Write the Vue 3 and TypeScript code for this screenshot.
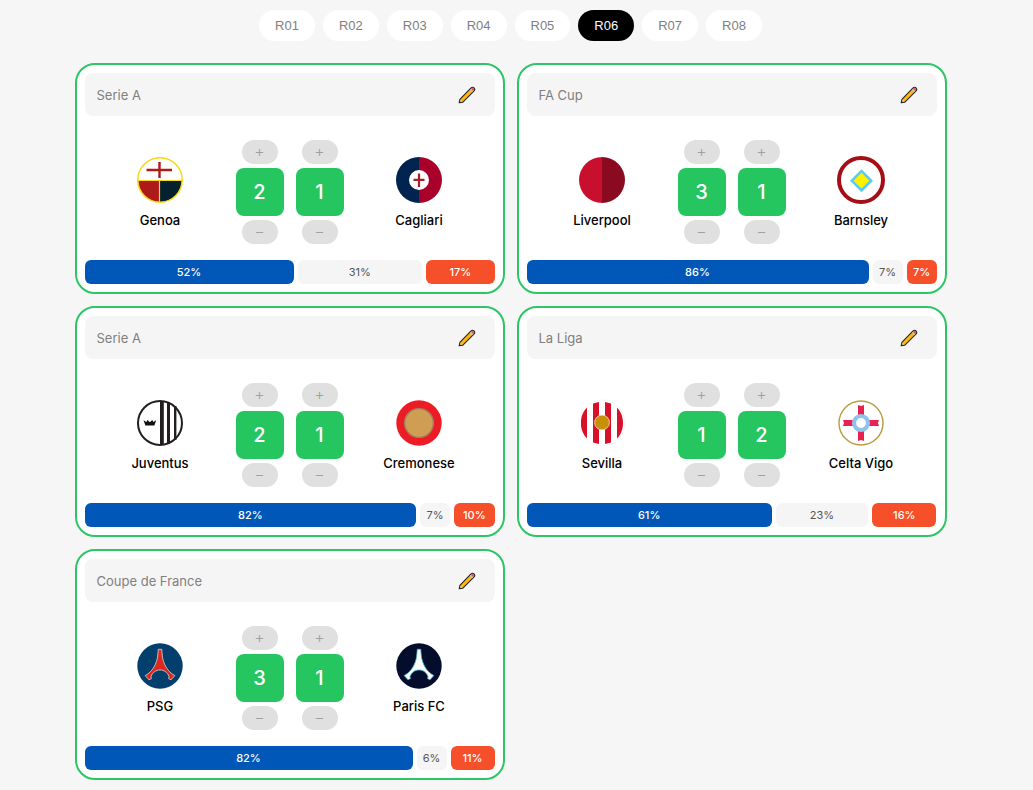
<script setup lang="ts">
import { ref } from 'vue'

type Side = 'home' | 'away'

interface Team {
  name: string
  crest: string
  score: number
}

interface Match {
  id: number
  competition: string
  home: Team
  away: Team
  odds: [number, number, number]
}

const rounds = ['R01', 'R02', 'R03', 'R04', 'R05', 'R06', 'R07', 'R08']
const active = ref('R06')
const sides: Side[] = ['home', 'away']
const kinds = ['win', 'draw', 'loss']

const matches = ref<Match[]>([
  { id: 1, competition: 'Serie A', home: { name: 'Genoa', crest: 'genoa', score: 2 }, away: { name: 'Cagliari', crest: 'cagliari', score: 1 }, odds: [52, 31, 17] },
  { id: 2, competition: 'FA Cup', home: { name: 'Liverpool', crest: 'liverpool', score: 3 }, away: { name: 'Barnsley', crest: 'barnsley', score: 1 }, odds: [86, 7, 7] },
  { id: 3, competition: 'Serie A', home: { name: 'Juventus', crest: 'juventus', score: 2 }, away: { name: 'Cremonese', crest: 'cremonese', score: 1 }, odds: [82, 7, 10] },
  { id: 4, competition: 'La Liga', home: { name: 'Sevilla', crest: 'sevilla', score: 1 }, away: { name: 'Celta Vigo', crest: 'celta', score: 2 }, odds: [61, 23, 16] },
  { id: 5, competition: 'Coupe de France', home: { name: 'PSG', crest: 'psg', score: 3 }, away: { name: 'Paris FC', crest: 'parisfc', score: 1 }, odds: [82, 6, 11] },
])

const tower = 'M22.3 7.3H25.7L26.3 14C27.2 21 31 29.5 38.8 33.6L35 37.8L32.6 36.6L33 34.4C31 30 28 28 24 28S17 30 15 34.4L15.4 36.6L13 37.8L9.2 33.6C17 29.5 20.8 21 21.7 14Z'
</script>

<template>
  <div class="page">
    <nav class="rounds" aria-label="Rounds">
      <button
        v-for="r in rounds"
        :key="r"
        type="button"
        class="round"
        :class="{ active: r === active }"
        @click="active = r"
      >{{ r }}</button>
    </nav>

    <main class="grid">
      <article v-for="m in matches" :key="m.id" class="card">
        <header class="card-head">
          <span>{{ m.competition }}</span>
          <button type="button" class="edit" aria-label="Edit">
            <svg width="18" height="18" viewBox="0 0 18 18" aria-hidden="true">
              <path d="M1.2 16.8L1.9 13.3L12.8 2.1C13.9 1.1 15.2 1.1 16 1.9C16.9 2.8 16.9 4.1 15.9 5.1L4.9 16.1Z" fill="#ffb80c" stroke="#26262c" stroke-width="1.1" stroke-linejoin="round" />
              <path d="M2.5 13.8L4.4 15.6L2 16Z" fill="#dccbc4" />
              <path d="M1 17L1.5 15L3 16.5Z" fill="#26262c" />
              <path d="M11.8 4L14.1 6.2L15.2 5.1L12.9 2.9Z" fill="#b9c3cb" />
              <path d="M13 2.8C13.9 1.9 14.9 1.8 15.6 2.4C16.2 3.1 16 4.2 15.2 5Z" fill="#ee4a63" />
            </svg>
          </button>
        </header>

        <div class="match">
          <div v-for="side in sides" :key="side" class="team" :class="side">
            <svg class="crest" viewBox="0 0 48 48" aria-hidden="true">
              <g v-if="m[side].crest === 'genoa'">
                <circle cx="24" cy="24" r="22" fill="#fff" />
                <path d="M2 24.5H23.5V46A22 22 0 0 1 2 24.5Z" fill="#ae1a1a" />
                <path d="M23.5 24.5H46A22 22 0 0 1 23.5 46Z" fill="#04222e" />
                <path d="M2 24.5H46M23.5 24V46" stroke="#f9d616" stroke-width="1.2" />
                <path d="M10.5 14H36M23.5 6V22" stroke="#ae1a1a" stroke-width="2.4" />
                <circle cx="24" cy="24" r="22.2" fill="none" stroke="#f9d616" stroke-width="1.5" />
              </g>
              <g v-else-if="m[side].crest === 'cagliari'">
                <path d="M24 1A23 23 0 0 0 24 47Z" fill="#00234f" />
                <path d="M24 1A23 23 0 0 1 24 47Z" fill="#a9002b" />
                <circle cx="24" cy="24" r="10" fill="#fff" />
                <path d="M18.5 23.8H29.5M24 17.5V31" stroke="#a81f28" stroke-width="2.2" />
              </g>
              <g v-else-if="m[side].crest === 'liverpool'">
                <path d="M24 1A23 23 0 0 0 24 47Z" fill="#c8102e" />
                <path d="M24 1A23 23 0 0 1 24 47Z" fill="#8a0b20" />
              </g>
              <g v-else-if="m[side].crest === 'barnsley'">
                <circle cx="24" cy="24" r="22" fill="#fff" stroke="#a50e14" stroke-width="4" />
                <path d="M24.5 13.2L36 24.7L24.5 36.2L13 24.7Z" fill="#5cc9f2" />
                <path d="M24.5 16.8L32.4 24.7L24.5 32.6L16.6 24.7Z" fill="#fff200" />
              </g>
              <g v-else-if="m[side].crest === 'juventus'">
                <path d="M24 2H27.8V46H24ZM31 3H34V45H31ZM38 7H40.4V41H38Z" fill="#231f20" />
                <path d="M7.5 21.2L10.4 23L11.5 21L13.9 23.2L16.2 21L17.4 23L20.2 21.2L18.4 26.4H9.4Z" fill="#111" />
                <circle cx="24" cy="24" r="22" fill="none" stroke="#231f20" stroke-width="2" />
              </g>
              <g v-else-if="m[side].crest === 'cremonese'">
                <circle cx="24" cy="24" r="22.7" fill="#ed1c24" />
                <circle cx="24" cy="24" r="14.4" fill="#cf9e52" stroke="#a27b63" stroke-width="1.4" />
              </g>
              <g v-else-if="m[side].crest === 'sevilla'">
                <circle cx="24" cy="24" r="23" fill="#fff" stroke="#f5f5f5" />
                <path d="M3 21C3.5 16 5.5 12 9 8.4V39.6C5.5 36 3.5 31 3 27ZM15 4.4L21 3V45L15 43.6ZM27 3L33 4.5V43.5L27 45ZM39 8.4C42.5 12 45 17 45 24S42.5 36 39 39.6Z" fill="#d8102a" />
                <circle cx="24" cy="23.5" r="7.4" fill="#c69008" stroke="#f6e3c0" stroke-width=".8" />
              </g>
              <g v-else-if="m[side].crest === 'celta'">
                <circle cx="24" cy="24" r="22" fill="#fff" stroke="#b79d3f" stroke-width="1.4" />
                <path d="M21 6L24 7L27 6V42L24 41L21 42ZM6 21H42L41 24L42 27H6L7 24Z" fill="#e62350" />
                <circle cx="24" cy="24" r="7" fill="#fff" stroke="#8fc3ee" stroke-width="4.2" />
              </g>
              <g v-else-if="m[side].crest === 'psg'">
                <circle cx="24" cy="24" r="22.7" fill="#023f6d" />
                <path :d="tower" fill="#dc291e" stroke="#d3d9e0" stroke-width=".8" />
              </g>
              <g v-else>
                <circle cx="24" cy="24" r="22.7" fill="#040d2c" />
                <path :d="tower" fill="#fff" stroke="#4bb4d2" stroke-width=".8" />
              </g>
            </svg>
            <span class="name">{{ m[side].name }}</span>
          </div>

          <div class="scores">
            <div v-for="side in sides" :key="side" class="stepper">
              <button type="button" class="step" disabled :aria-label="'Add a goal for ' + m[side].name">+</button>
              <output class="score">{{ m[side].score }}</output>
              <button type="button" class="step" disabled :aria-label="'Remove a goal for ' + m[side].name">−</button>
            </div>
          </div>
        </div>

        <div class="odds">
          <div
            v-for="(value, i) in m.odds"
            :key="i"
            class="odd"
            :class="kinds[i]"
            :style="{ flexGrow: value }"
          >{{ value }}%</div>
        </div>
      </article>
    </main>
  </div>
</template>

<style>
body {
  background: #f6f6f6;
}
</style>

<style scoped>
.page {
  box-sizing: border-box;
  padding: 10px 12px 10px 0;
  background: #f6f6f6;
  color: #000;
  font-family: Inter, "Liberation Sans", sans-serif;
  font-size: 13px;
}

.page * {
  box-sizing: border-box;
}

button {
  margin: 0;
  border: 0;
  font: inherit;
}

.rounds {
  display: flex;
  justify-content: center;
  gap: 8px;
  margin-bottom: 22px;
}

.round {
  padding: 8px 16px;
  border-radius: 16px;
  background: #fff;
  color: #808080;
  font-family: "Liberation Sans", Arial, sans-serif;
  font-size: 13px;
  line-height: 15px;
}

.round.active {
  background: #000;
  color: #fff;
}

.grid {
  display: grid;
  grid-template-columns: repeat(2, minmax(0, 1fr));
  gap: 12px;
  max-width: 872px;
  margin: 0 auto;
}

.card {
  padding: 8px;
  border: 2px solid #2dc566;
  border-radius: 20px;
  background: #fff;
}

.card-head {
  display: flex;
  align-items: center;
  justify-content: space-between;
  height: 43px;
  padding: 0 12px;
  border-radius: 8px;
  background: #f5f5f5;
  color: #808080;
}

.edit {
  display: flex;
  align-items: center;
  justify-content: center;
  width: 32px;
  height: 28px;
  padding: 0;
  background: transparent;
}

.match {
  display: grid;
  grid-template-columns: 1fr auto 1fr;
  align-items: center;
  padding: 24px 0 16px;
}

.team {
  display: flex;
  flex-direction: column;
  align-items: center;
  gap: 8px;
  grid-row: 1;
}

.team.home {
  grid-column: 1;
}

.team.away {
  grid-column: 3;
}

.crest {
  display: block;
  width: 48px;
  height: 48px;
}

.name {
  font-weight: 500;
  line-height: 16px;
}

.scores {
  display: flex;
  gap: 12px;
  grid-row: 1;
  grid-column: 2;
}

.stepper {
  display: flex;
  flex-direction: column;
  align-items: center;
  gap: 4px;
}

.step {
  width: 36px;
  height: 24px;
  padding: 0 0 2px;
  border-radius: 12px;
  background: #e0e0e0;
  color: #a0a0a0;
  font-size: 16px;
  font-weight: 300;
  line-height: 22px;
}

.score {
  display: block;
  width: 48px;
  height: 48px;
  border-radius: 8px;
  background: #25c55f;
  color: #fff;
  font-size: 20px;
  font-weight: 500;
  line-height: 48px;
  text-align: center;
}

.odds {
  display: flex;
  gap: 4px;
}

.odd {
  flex: 1 1 0;
  min-width: 30px;
  border-radius: 6px;
  font-size: 11px;
  font-weight: 500;
  line-height: 24px;
  text-align: center;
}

.win {
  background: #0057b8;
  color: #fff;
}

.draw {
  background: #f5f5f5;
  color: #555;
  font-weight: 400;
}

.loss {
  background: #f6502a;
  color: #fff;
}
</style>
